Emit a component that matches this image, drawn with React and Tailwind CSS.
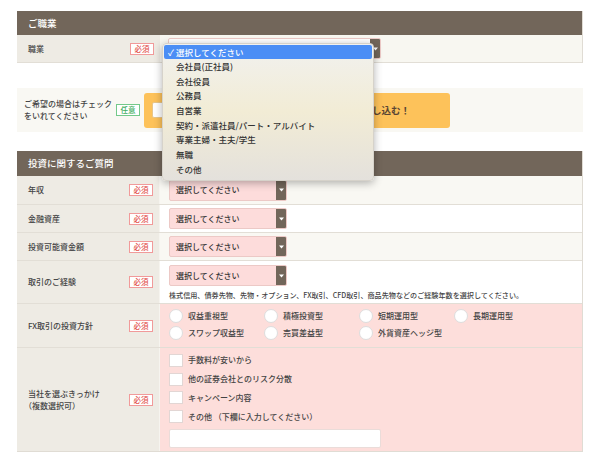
import React from "react";

const font = { fontFamily: '"Noto Sans CJK JP", "Noto Sans", sans-serif' };

function Req() {
  return (
    <span className="inline-flex items-center justify-center w-[24px] h-[12px] border border-[#f19a9a] bg-white text-[#e2544f] text-[7.5px] font-medium leading-none shrink-0">
      必須
    </span>
  );
}

function Any() {
  return (
    <span className="inline-flex items-center justify-center w-[24px] h-[12px] border border-[#74c98a] bg-white text-[#3fae5e] text-[7.5px] font-medium leading-none shrink-0">
      任意
    </span>
  );
}

function Select({ w = "w-[118px]", bg = "bg-[#fddcdb]", text = "選択してください" }) {
  return (
    <div className={`flex h-[21px] ${w} ${bg} border border-[#ecc9c6] rounded-[2px] overflow-hidden`}>
      <div className="flex-1 flex items-center pl-[6px] text-[8px] font-medium text-[#333]">{text}</div>
      <div className="w-[10px] bg-[#72665a] flex items-center justify-center">
        <svg width="5" height="4" viewBox="0 0 5 4"><path d="M0 0.5h5L2.5 3.5z" fill="#fff" /></svg>
      </div>
    </div>
  );
}

function Row({ label, children, h, right = "bg-white", badge = true, top = true }) {
  return (
    <div className={`flex ${h} ${top ? "border-t border-[#e2ded6]" : ""}`}>
      <div className="w-[143px] bg-[#eeebe4] flex items-center pl-[11px] pr-[6px] border-r border-[#f6f4ef]">
        <div className="flex-1 text-[8px] font-medium leading-[12px] text-[#444]">{label}</div>
        {badge && <Req />}
      </div>
      <div className={`flex-1 ${right} pl-[9px] flex flex-col justify-center`}>{children}</div>
    </div>
  );
}

function Radio({ text }) {
  return (
    <div className="w-[95px] flex items-center gap-[5px] h-[17px]">
      <span className="w-[14px] h-[14px] rounded-full bg-white border border-[#ddd] shrink-0" />
      <span className="text-[8px] font-medium text-[#444]">{text}</span>
    </div>
  );
}

function Check({ text }) {
  return (
    <div className="flex items-center gap-[5px] h-[18.7px]">
      <span className="w-[14px] h-[13px] bg-white border border-[#e2d6d4] shrink-0" />
      <span className="text-[8px] font-medium text-[#444]">{text}</span>
    </div>
  );
}

const items = [
  "会社員(正社員)",
  "会社役員",
  "公務員",
  "自営業",
  "契約・派遣社員/パート・アルバイト",
  "専業主婦・主夫/学生",
  "無職",
  "その他",
];

export default function App() {
  return (
    <div className="relative w-[600px] h-[464px] bg-white overflow-hidden" style={font}>
      <div className="px-[17px] pt-[11px] flex flex-col">
        {/* Section 1 */}
        <div className="border-r border-[#e0dcd4]">
          <div className="h-[24px] bg-[#72665a] flex items-center pl-[11px] text-[9.5px] font-medium text-white">ご職業</div>
          <div className="flex h-[28px] border-b border-[#e2ded6]">
            <div className="w-[143px] bg-[#eeebe4] flex items-center pl-[11px] pr-[6px]">
              <div className="flex-1 text-[8px] font-medium text-[#444]">職業</div>
              <Req />
            </div>
            <div className="flex-1 bg-[#f8f7f1] pl-[8px] flex items-center">
              <Select w="w-[213px]" bg="bg-white" text="" />
            </div>
          </div>
        </div>

        {/* hint row */}
        <div className="mt-[25px] h-[44px] bg-[#f9f8f3] flex items-center pl-[7px]">
          <div className="text-[8px] font-medium leading-[12px] text-[#444] w-[92px]">
            ご希望の場合はチェック<br />をいれてください
          </div>
          <Any />
          <div className="ml-[4px] w-[306px] h-[35px] bg-[#fdc25a] rounded-[3px] flex items-center pl-[8px] pr-[40px]">
            <span className="w-[16px] h-[16px] bg-white border border-[#e8c68a] rounded-[2px]" />
            <span className="flex-1" />
            <span className="text-[9.5px] font-bold text-[#5a4634]">FX口座も同時に申し込む！</span>
          </div>
        </div>

        {/* Section 2 */}
        <div className="mt-[19px] border-r border-b border-[#e0dcd4]">
          <div className="h-[25px] bg-[#72665a] flex items-center pl-[11px] text-[9.5px] font-medium text-white">投資に関するご質問</div>
          <Row label="年収" h="h-[28px]" right="bg-[#f9f8f3]" top={false}>
            <Select />
          </Row>
          <Row label="金融資産" h="h-[28px]">
            <Select />
          </Row>
          <Row label="投資可能資金額" h="h-[28px]" right="bg-[#f9f8f3]">
            <Select />
          </Row>
          <Row label="取引のご経験" h="h-[43px]">
            <div className="pt-[2px]">
              <Select />
              <div className="mt-[4px] text-[7.1px] font-medium text-[#444] whitespace-nowrap">
                株式信用、債券先物、先物・オプション、FX取引、CFD取引、商品先物などのご経験年数を選択してください。
              </div>
            </div>
          </Row>
          <Row label="FX取引の投資方針" h="h-[44px]" right="bg-[#fddedb]">
            <div className="flex flex-wrap w-[380px] -mt-[3px]">
              <Radio text="収益重視型" />
              <Radio text="積極投資型" />
              <Radio text="短期運用型" />
              <Radio text="長期運用型" />
              <Radio text="スワップ収益型" />
              <Radio text="売買差益型" />
              <Radio text="外貨資産ヘッジ型" />
            </div>
          </Row>
          <Row
            label={<>当社を選ぶきっかけ<br /><span className="-ml-[4px]">（複数選択可）</span></>}
            h="h-[104px]"
            right="bg-[#fddedb]"
          >
            <div className="flex flex-col">
              <Check text="手数料が安いから" />
              <Check text="他の証券会社とのリスク分散" />
              <Check text="キャンペーン内容" />
              <Check text="その他 （下欄に入力してください）" />
              <div className="mt-[3px] w-[212px] h-[19px] bg-white border border-[#eadcd9] rounded-[2px]" />
            </div>
          </Row>
        </div>
      </div>

      {/* Dropdown popup */}
      <div className="absolute left-[162px] top-[43px] w-[212px] h-[138px] rounded-[4px] shadow-[0_2px_8px_rgba(0,0,0,0.3)] border border-[#d6d2ca] bg-gradient-to-b from-[#f1f1ef] via-[#f2ecd5] to-[#e4e1dc] py-[1px] px-[1px]">
        <div className="h-[14px] bg-[#4b8ef5] rounded-[2px] flex items-center text-white text-[8.5px] font-medium pl-[4px]">
          <span className="w-[8px]">✓</span>選択してください
        </div>
        {items.map((t) => (
          <div key={t} className="h-[14.7px] flex items-center pl-[12px] text-[8.5px] font-medium text-[#333]">
            {t}
          </div>
        ))}
      </div>
    </div>
  );
}
